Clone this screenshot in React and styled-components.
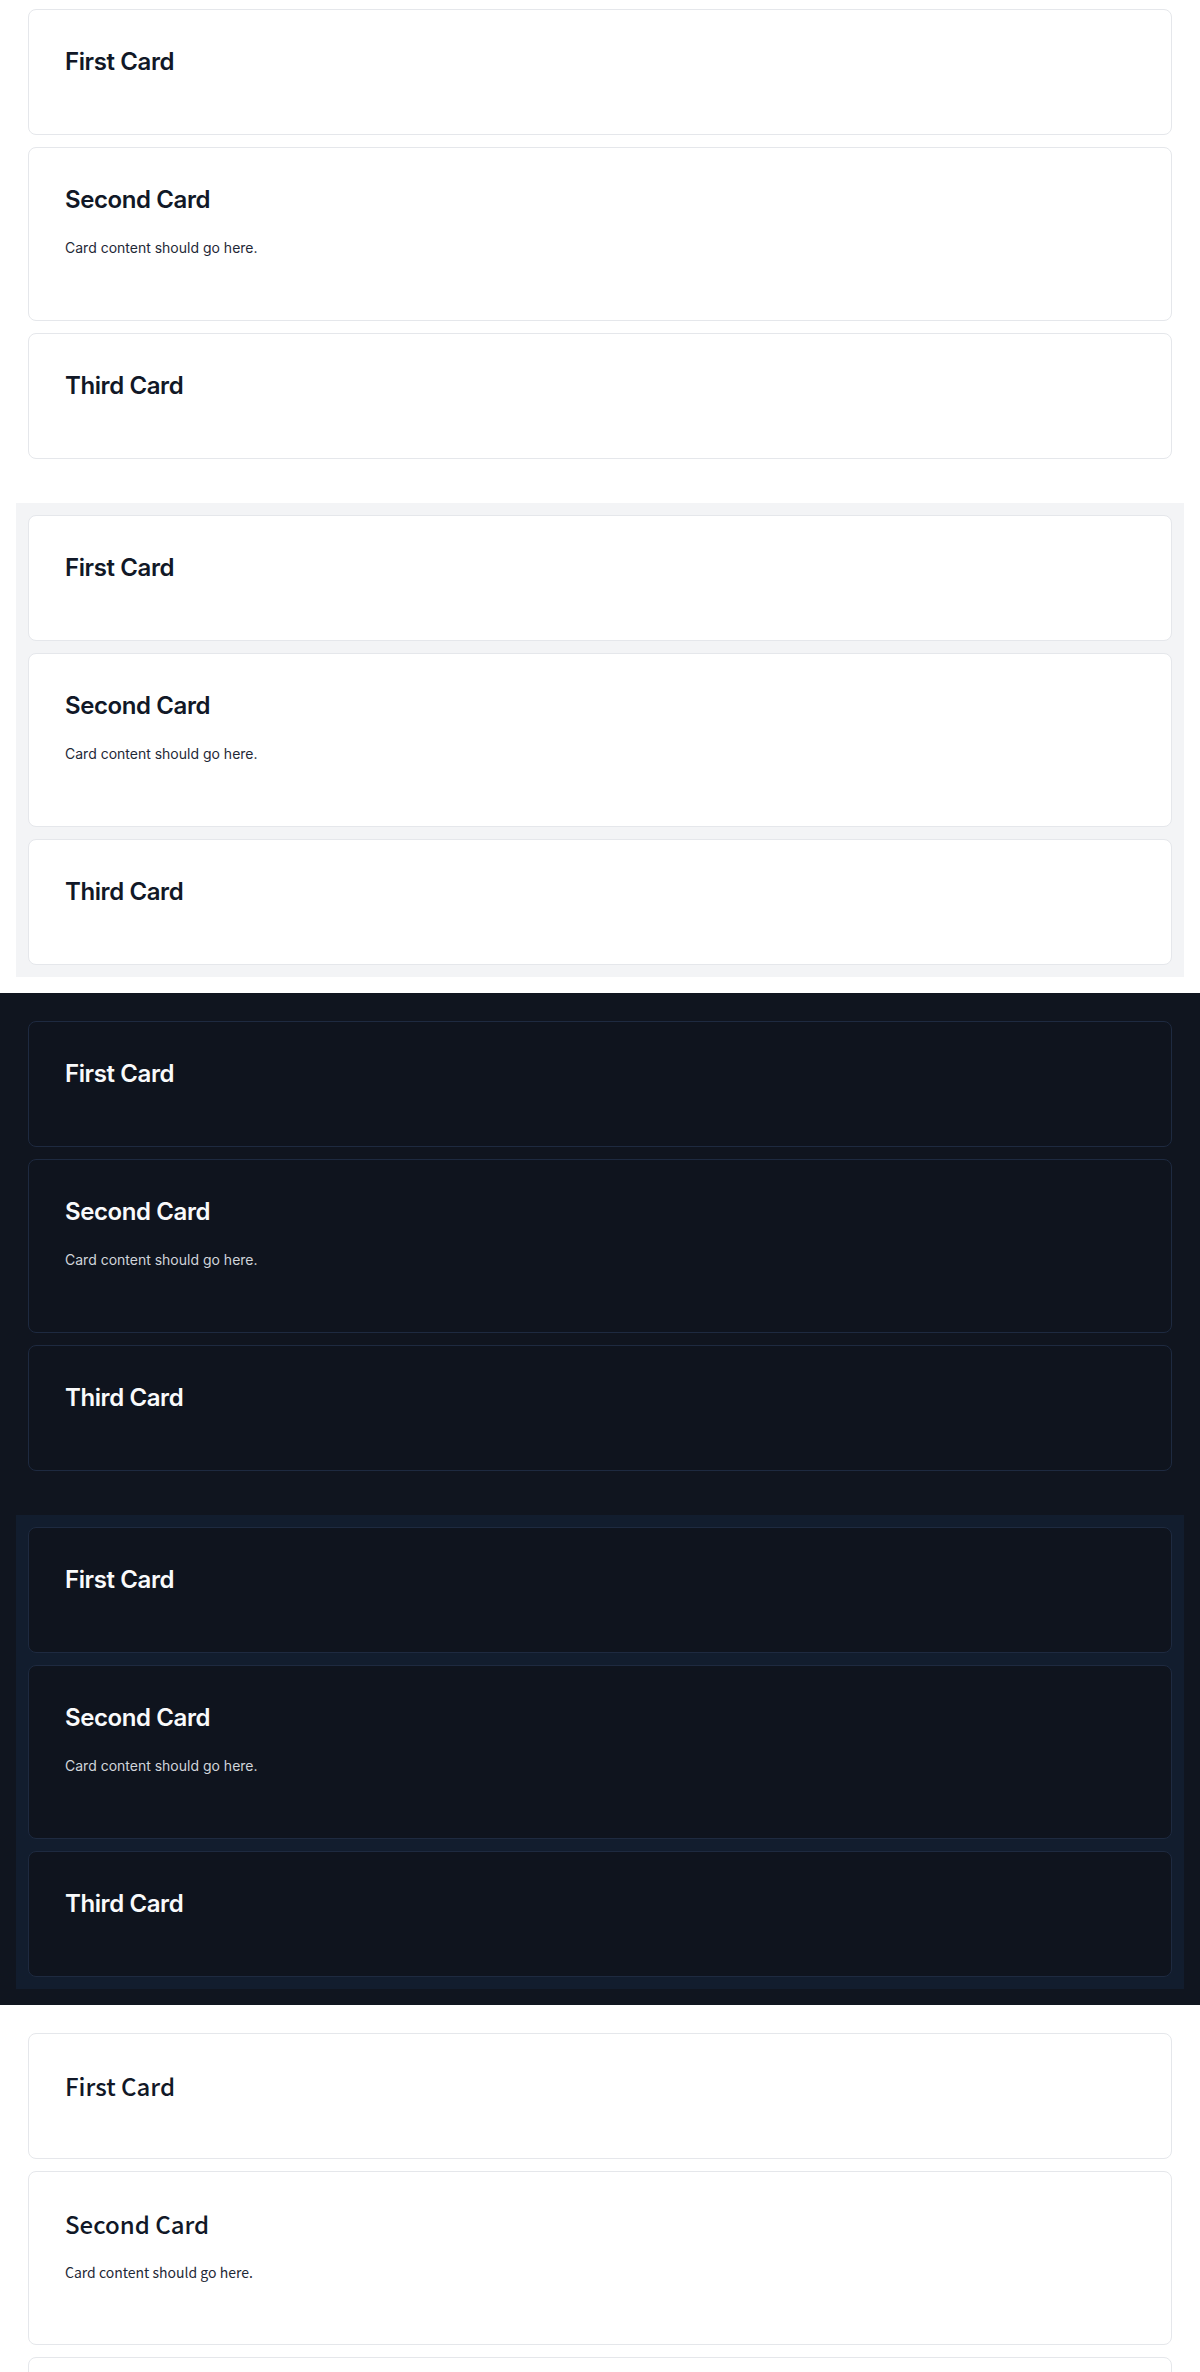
import React from 'react';
import styled, { createGlobalStyle, css } from 'styled-components';

const GlobalStyle = createGlobalStyle`
  * {
    box-sizing: border-box;
  }
  body {
    margin: 0;
    background: #ffffff;
    font-family: Inter, 'Liberation Sans', sans-serif;
  }
`;

const themes = {
  light: {
    page: '#ffffff',
    panel: '#f3f4f6',
    card: '#ffffff',
    border: '#e5e7eb',
    title: '#111827',
    text: '#1f2937',
    font: "Inter, 'Liberation Sans', sans-serif",
    weight: 600,
    tracking: '-0.4px',
  },
  dark: {
    page: '#10151f',
    panel: '#121d2e',
    card: '#0f141e',
    border: '#1e2a40',
    title: '#f9fafb',
    text: '#d1d5db',
    font: "Inter, 'Liberation Sans', sans-serif",
    weight: 600,
    tracking: '-0.4px',
  },
  plain: {
    page: '#ffffff',
    panel: '#f3f4f6',
    card: '#ffffff',
    border: '#e5e7eb',
    title: '#111827',
    text: '#1f2937',
    font: "'Noto Sans CJK SC', 'Noto Sans', sans-serif",
    weight: 500,
    tracking: 'normal',
  },
};

const Section = styled.section`
  padding: 16px;
  background: ${p => p.$t.page};
  font-family: ${p => p.$t.font};
  display: flex;
  flex-direction: column;
  gap: 32px;

  ${p =>
    p.$top &&
    css`
      margin-top: -19px;
    `}
`;

const Stack = styled.div`
  padding: 12px;
  display: flex;
  flex-direction: column;
  gap: 12px;
  background: ${p => (p.$filled ? p.$t.panel : 'transparent')};
`;

const Card = styled.div`
  padding: 36px;
  border: 1px solid ${p => p.$t.border};
  border-radius: 8px;
  background: ${p => p.$t.card};
`;

const Title = styled.h2`
  margin: 0 0 20px;
  font-size: 24px;
  line-height: 32px;
  font-weight: ${p => p.$t.weight};
  letter-spacing: ${p => p.$t.tracking};
  color: ${p => p.$t.title};
`;

const Text = styled.p`
  margin: 0 0 24px;
  font-size: 14px;
  line-height: 24px;
  color: ${p => p.$t.text};
`;

const cards = [
  { title: 'First Card' },
  { title: 'Second Card', body: 'Card content should go here.' },
  { title: 'Third Card' },
];

function CardStack({ t, filled }) {
  return (
    <Stack $t={t} $filled={filled}>
      {cards.map(c => (
        <Card key={c.title} $t={t}>
          <Title $t={t}>{c.title}</Title>
          {c.body && <Text $t={t}>{c.body}</Text>}
        </Card>
      ))}
    </Stack>
  );
}

export default function App() {
  return (
    <>
      <GlobalStyle />
      <Section $t={themes.light} $top>
        <CardStack t={themes.light} />
        <CardStack t={themes.light} filled />
      </Section>
      <Section $t={themes.dark}>
        <CardStack t={themes.dark} />
        <CardStack t={themes.dark} filled />
      </Section>
      <Section $t={themes.plain}>
        <CardStack t={themes.plain} />
      </Section>
    </>
  );
}
